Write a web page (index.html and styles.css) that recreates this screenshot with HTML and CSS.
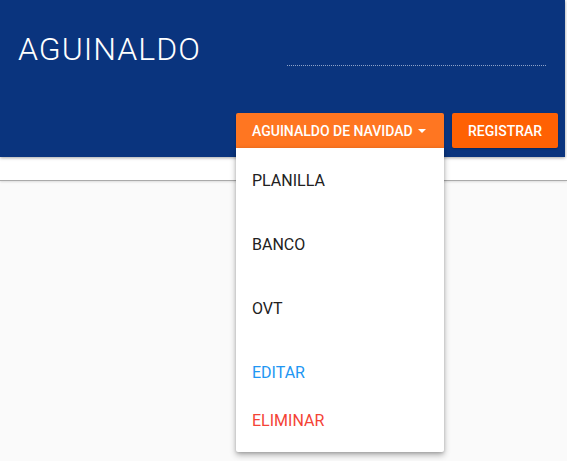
FILE: index.html
```html
<!DOCTYPE html>
<html lang="es">
<head>
<meta charset="utf-8">
<title>Aguinaldo</title>
<link rel="stylesheet" href="styles.css">
</head>
<body>
<header class="app-header">
  <div class="title-row">
    <h1 class="title">AGUINALDO</h1>
    <div class="field-line"></div>
  </div>
  <div class="actions">
    <div class="dropdown">
      <button class="btn btn-menu">AGUINALDO DE NAVIDAD<span class="caret"></span></button>
      <ul class="menu">
        <li class="item gap">PLANILLA</li>
        <li class="item gap">BANCO</li>
        <li class="item gap">OVT</li>
        <li class="item edit">EDITAR</li>
        <li class="item delete">ELIMINAR</li>
      </ul>
    </div>
    <button class="btn btn-primary">REGISTRAR</button>
  </div>
</header>
<div class="strip"></div>
<main class="content"></main>
</body>
</html>
```

FILE: styles.css
```css
html, body {
  margin: 0;
  padding: 0;
  height: 100%;
  background: #fafafa;
  font-family: Roboto, "Liberation Sans", sans-serif;
  overflow: hidden;
}

.app-header {
  width: 565px;
  height: 157px;
  background: #0a347e;
  box-shadow: 0 1px 3px rgba(0, 0, 0, 0.35);
  position: relative;
  z-index: 2;
  box-sizing: border-box;
  padding-top: 31px;
}

.title-row {
  display: flex;
  align-items: flex-start;
  padding-left: 18px;
}

.title {
  margin: 0;
  font-weight: 300;
  font-size: 32px;
  line-height: 36px;
  letter-spacing: 1px;
  color: #ffffff;
  width: 269px;
  white-space: nowrap;
}

.field-line {
  width: 259px;
  margin-top: 34px;
  border-top: 1px dotted #8ea3c8;
}

.actions {
  display: flex;
  justify-content: flex-end;
  gap: 8px;
  padding-right: 7px;
  margin-top: 46px;
}

.dropdown {
  position: relative;
}

.btn {
  border: none;
  height: 35px;
  padding: 0 16px;
  font-family: Roboto, "Liberation Sans", sans-serif;
  font-weight: 500;
  font-size: 14px;
  color: #ffffff;
  border-radius: 2px;
  display: flex;
  align-items: center;
  white-space: nowrap;
  box-shadow: 0 1px 2px rgba(0, 0, 0, 0.25);
}

.btn-menu {
  background: #ff7621;
  width: 208px;
  border-radius: 2px 2px 0 0;
}

.caret {
  display: inline-block;
  width: 0;
  height: 0;
  margin-left: 5px;
  border-top: 4px solid #ffffff;
  border-left: 4px solid transparent;
  border-right: 4px solid transparent;
}

.btn-primary {
  background: #ff6103;
  width: 106px;
  justify-content: center;
}

.menu {
  position: absolute;
  top: 35px;
  left: 0;
  width: 208px;
  margin: 0;
  padding: 8px 0;
  list-style: none;
  background: #ffffff;
  box-shadow: 0 3px 6px rgba(0, 0, 0, 0.3), 0 1px 3px rgba(0, 0, 0, 0.15);
  border-radius: 0 0 2px 2px;
  z-index: 5;
}

.item {
  padding: 15px 16px 13px;
  font-size: 16px;
  line-height: 20px;
  color: #212121;
}

.item.gap {
  margin-bottom: 16px;
}

.item.edit {
  color: #2196f3;
}

.item.delete {
  color: #f44336;
}

.strip {
  height: 23px;
  background: #ffffff;
  border-bottom: 1px solid #aaaaaa;
  box-shadow: 0 1px 2px rgba(0, 0, 0, 0.12);
}

.content {
  background: #fafafa;
}
```
